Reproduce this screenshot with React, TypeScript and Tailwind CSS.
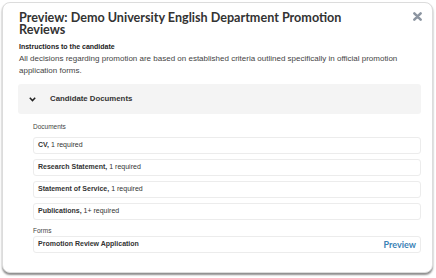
import React from 'react';

const docs = [
  { name: 'CV', req: '1 required' },
  { name: 'Research Statement', req: '1 required' },
  { name: 'Statement of Service', req: '1 required' },
  { name: 'Publications', req: '1+ required' },
];

export default function App() {
  return (
    <div className="w-[436px] h-[278px] bg-white p-[2px] font-['Liberation_Sans',Arial,sans-serif]">
      <div className="w-[431px] h-[271px] rounded-[8px] border border-[#dcdcdc] bg-white shadow-[0_2px_2px_rgba(0,0,0,0.45)] pl-[15px] pr-[11px] pt-[9px] flex flex-col">
        {/* Header */}
        <div className="flex items-start justify-between">
          <h1 className="w-[360px] pl-[1px] font-['Lato',sans-serif] font-bold text-[12.6px] leading-[12px] text-[#333]">
            Preview: Demo University English Department Promotion Reviews
          </h1>
          <button className="-mr-[1px] text-[#8c95a1]">
            <svg width="9" height="9" viewBox="0 0 10 10">
              <path d="M1.5 1.5 L8.5 8.5 M8.5 1.5 L1.5 8.5" stroke="currentColor" strokeWidth="2.8" strokeLinecap="round" />
            </svg>
          </button>
        </div>

        <div className="mt-[5px] pl-[1px] text-[7px] font-bold text-[#222] leading-[12px]">Instructions to the candidate</div>
        <p className="pl-[1px] text-[8px] leading-[12px] text-[#444] w-[395px]">
          All decisions regarding promotion are based on established criteria outlined specifically in official promotion application forms.
        </p>

        {/* Accordion */}
        <div className="mt-[7px] h-[30px] rounded-[3px] bg-[#f4f4f4] flex items-center pl-[11px]">
          <svg width="7" height="5" viewBox="0 0 7 5" className="text-[#222]">
            <path d="M0.8 0.8 L3.5 3.6 L6.2 0.8" fill="none" stroke="currentColor" strokeWidth="1.5" />
          </svg>
          <span className="ml-[14px] text-[7.8px] font-bold text-[#333]">Candidate Documents</span>
        </div>

        <div className="pl-[15px] flex flex-col">
          <div className="mt-[7px] text-[6.5px] text-[#444] leading-[12px]">Documents</div>
          <div className="mt-[4px] flex flex-col gap-[5px]">
            {docs.map((d) => (
              <div key={d.name} className="h-[17px] rounded-[3px] border border-[#ececec] flex items-center pl-[4px] text-[7px] text-[#333]">
                <span className="font-bold">{d.name},</span>
                <span className="ml-[2px]">{d.req}</span>
              </div>
            ))}
          </div>
          <div className="mt-[7px] text-[6.5px] text-[#444] leading-[8px]">Forms</div>
          <div className="mt-[1px] h-[17px] rounded-[3px] border border-[#ececec] flex items-center justify-between pl-[4px] pr-[4px] text-[7px] text-[#333]">
            <span className="font-bold">Promotion Review Application</span>
            <span className="text-[9px] font-bold font-['Lato',sans-serif] text-[#3a82b5]">Preview</span>
          </div>
        </div>
      </div>
    </div>
  );
}
